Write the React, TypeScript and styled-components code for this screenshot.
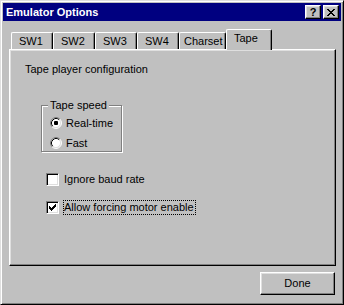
import React from "react";
import styled, { createGlobalStyle } from "styled-components";

const GlobalStyle = createGlobalStyle`
  html, body { margin: 0; padding: 0; background: #c0c0c0; }
  body {
    font-family: "Liberation Sans", Arial, sans-serif;
    font-size: 11px;
    line-height: 13px;
    color: #000;
    -webkit-font-smoothing: none;
  }
  * { box-sizing: border-box; }
`;

const Window = styled.div`
  width: 344px;
  height: 305px;
  display: flex;
  flex-direction: column;
  background: #c0c0c0;
  border: 1px solid;
  border-color: #dfdfdf #000 #000 #dfdfdf;
  box-shadow: inset 1px 1px #fff, inset -1px -1px #808080;
  padding: 2px;
`;

const TitleBar = styled.div`
  height: 18px;
  flex: none;
  display: flex;
  align-items: center;
  gap: 2px;
  background: #000080;
  color: #fff;
  padding: 0 2px 0 3px;
`;

const Title = styled.div`
  flex: 1;
  font-weight: bold;
  font-size: 11px;
  line-height: 13px;
`;

const CaptionButton = styled.button`
  width: 16px;
  height: 14px;
  padding: 0;
  margin: 0;
  display: flex;
  align-items: center;
  justify-content: center;
  background: #c0c0c0;
  border: 1px solid;
  border-color: #fff #000 #000 #fff;
  box-shadow: inset -1px -1px #808080, inset 1px 1px #dfdfdf;
  font-family: "Liberation Sans", Arial, sans-serif;
  font-weight: bold;
  font-size: 11px;
  line-height: 11px;
  color: #000;
`;

const Body = styled.div`
  flex: 1;
  display: flex;
  flex-direction: column;
  padding: 8px 5px 0 6px;
`;

const TabStrip = styled.div`
  height: 20px;
  flex: none;
  display: flex;
  align-items: flex-end;
  padding-left: 2px;
`;

const Tab = styled.div<{ $active?: boolean; $width: number; $pad: number }>`
  width: ${(p) => p.$width}px;
  height: ${(p) => (p.$active ? 21 : 17)}px;
  margin-bottom: ${(p) => (p.$active ? -1 : 0)}px;
  position: relative;
  z-index: ${(p) => (p.$active ? 1 : 0)};
  display: flex;
  align-items: center;
  padding-left: ${(p) => p.$pad}px;
  padding-bottom: ${(p) => (p.$active ? 3 : 0)}px;
  background: #c0c0c0;
  border-style: solid;
  border-width: 1px 1px 0 1px;
  border-color: #fff #000 #000 #fff;
  border-radius: 2px 2px 0 0;
  box-shadow: inset -1px 0 #808080;
  white-space: nowrap;
`;

const Panel = styled.div`
  flex: 1;
  display: flex;
  flex-direction: column;
  align-items: flex-start;
  border: 1px solid;
  border-color: #fff #000 #000 #fff;
  box-shadow: inset -1px -1px #808080, inset 1px 1px #dfdfdf;
  padding: 13px 0 0 15px;
`;

const Heading = styled.div`
  line-height: 13px;
`;

const GroupBox = styled.fieldset`
  margin: 23px 0 0 16px;
  width: 81px;
  min-inline-size: 0;
  padding: 3px 0 0 8px;
  border: 1px solid #808080;
  box-shadow: 1px 1px 0 #fff, inset 1px 1px 0 #fff;
  display: flex;
  flex-direction: column;
  gap: 4px;
`;

const Legend = styled.legend`
  padding: 0 2px;
  margin-left: -2px;
  line-height: 13px;
  background: #c0c0c0;
`;

const OptionRow = styled.label`
  height: 16px;
  display: flex;
  align-items: center;
  gap: 4px;
  white-space: nowrap;
`;

const CheckList = styled.div`
  margin: 20px 0 0 21px;
  display: flex;
  flex-direction: column;
  gap: 13px;
`;

const CheckRow = styled.label`
  height: 15px;
  display: flex;
  align-items: center;
  gap: 4px;
  white-space: nowrap;
`;

const CheckBoxFrame = styled.span`
  width: 13px;
  height: 13px;
  flex: none;
  display: block;
  background: #fff;
  border: 1px solid;
  border-color: #808080 #fff #fff #808080;
  box-shadow: inset 1px 1px #000, inset -1px -1px #dfdfdf;
`;

const CheckLabel = styled.span<{ $focused?: boolean }>`
  line-height: 13px;
  padding-right: 1px;
  border: 1px dotted ${(p) => (p.$focused ? "#000" : "transparent")};
`;

const Footer = styled.div`
  flex: none;
  display: flex;
  justify-content: flex-end;
  padding: 6px 1px 7px 0;
`;

const PushButton = styled.button`
  width: 75px;
  height: 23px;
  padding: 0;
  margin: 0;
  background: #c0c0c0;
  border: 1px solid;
  border-color: #fff #000 #000 #fff;
  box-shadow: inset -1px -1px #808080, inset 1px 1px #dfdfdf;
  font-family: "Liberation Sans", Arial, sans-serif;
  font-size: 11px;
  line-height: 13px;
  color: #000;
`;

const CloseGlyph = () => {
  const rows = ["XX....XX", ".XX..XX.", "..XXXX..", "...XX...", "..XXXX..", ".XX..XX.", "XX....XX"];
  return (
    <svg width="8" height="7" viewBox="0 0 8 7" shapeRendering="crispEdges">
      {rows.flatMap((r, y) =>
        r.split("").map((c, x) => (c === "X" ? <rect key={`${x}-${y}`} x={x} y={y} width="1" height="1" fill="#000" /> : null))
      )}
    </svg>
  );
};

const RadioGlyph = ({ checked }: { checked?: boolean }) => (
  <svg width="12" height="12" viewBox="0 0 12 12" style={{ flex: "none" }}>
    <circle cx="6" cy="6" r="5" fill="#fff" />
    <path d="M 2.11 9.89 A 5.5 5.5 0 0 1 9.89 2.11" stroke="#808080" fill="none" />
    <path d="M 9.89 2.11 A 5.5 5.5 0 0 1 2.11 9.89" stroke="#fff" fill="none" />
    <path d="M 2.82 9.18 A 4.5 4.5 0 0 1 9.18 2.82" stroke="#000" fill="none" />
    <path d="M 9.18 2.82 A 4.5 4.5 0 0 1 2.82 9.18" stroke="#dfdfdf" fill="none" />
    {checked && <rect x="4" y="4" width="4" height="4" rx="1" fill="#000" />}
  </svg>
);

const CheckBox = ({ checked }: { checked?: boolean }) => {
  const cols = [2, 3, 4, 3, 2, 1, 0];
  return (
    <CheckBoxFrame>
      {checked && (
        <svg width="11" height="11" viewBox="0 0 11 11" shapeRendering="crispEdges" style={{ display: "block" }}>
          {cols.map((top, i) => (
            <rect key={i} x={2 + i} y={2 + top} width="1" height="3" fill="#000" />
          ))}
        </svg>
      )}
    </CheckBoxFrame>
  );
};

const tabs = [
  { label: "SW1", width: 42, pad: 7 },
  { label: "SW2", width: 42, pad: 7 },
  { label: "SW3", width: 42, pad: 7 },
  { label: "SW4", width: 42, pad: 7 },
  { label: "Charset", width: 47, pad: 4 },
  { label: "Tape", width: 46, pad: 7, active: true },
];

export default function App() {
  return (
    <>
      <GlobalStyle />
      <Window>
        <TitleBar>
          <Title>Emulator Options</Title>
          <CaptionButton aria-label="Help">?</CaptionButton>
          <CaptionButton aria-label="Close">
            <CloseGlyph />
          </CaptionButton>
        </TitleBar>
        <Body>
          <TabStrip>
            {tabs.map((t) => (
              <Tab key={t.label} $active={t.active} $width={t.width} $pad={t.pad}>
                {t.label}
              </Tab>
            ))}
          </TabStrip>
          <Panel>
            <Heading>Tape player configuration</Heading>
            <GroupBox>
              <Legend>Tape speed</Legend>
              <OptionRow>
                <RadioGlyph checked />
                Real-time
              </OptionRow>
              <OptionRow>
                <RadioGlyph />
                Fast
              </OptionRow>
            </GroupBox>
            <CheckList>
              <CheckRow>
                <CheckBox />
                <CheckLabel>Ignore baud rate</CheckLabel>
              </CheckRow>
              <CheckRow>
                <CheckBox checked />
                <CheckLabel $focused>Allow forcing motor enable</CheckLabel>
              </CheckRow>
            </CheckList>
          </Panel>
          <Footer>
            <PushButton>Done</PushButton>
          </Footer>
        </Body>
      </Window>
    </>
  );
}
